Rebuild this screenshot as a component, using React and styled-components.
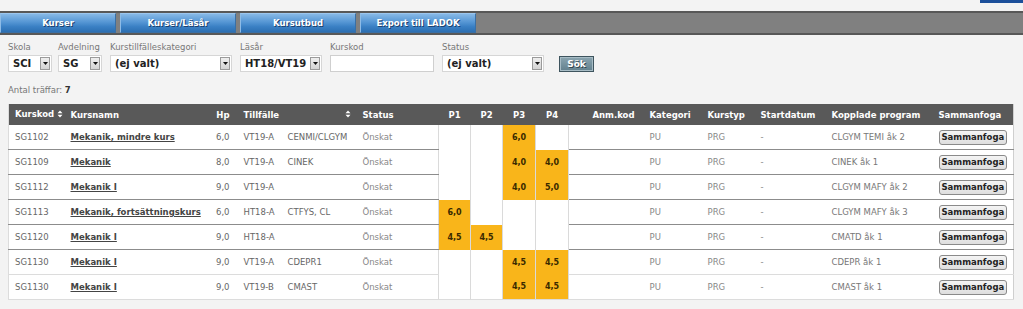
import React from "react";
import styled, { createGlobalStyle } from "styled-components";

const Global = createGlobalStyle`
  html, body { margin: 0; padding: 0; background: #f3f3f3; }
  body { font-family: "DejaVu Sans", Verdana, sans-serif; font-size: 8.5px; color: #666; }
`;

const Page = styled.div`
  width: 1023px;
  height: 309px;
  overflow: hidden;
  background: #f3f3f3;
`;

const TopStrip = styled.div`
  height: 11px;
  display: flex;
  justify-content: flex-end;
`;

const TopMark = styled.div`
  width: 43px;
  height: 3px;
  background: #1b4f9a;
`;

const NavBar = styled.div`
  display: flex;
  gap: 4px;
  height: 20px;
  background: #808080;
  border-top: 2px solid #585858;
  border-bottom: 2px solid #585858;
`;

const Tab = styled.div`
  width: 116px;
  height: 20px;
  box-sizing: border-box;
  display: flex;
  align-items: center;
  justify-content: center;
  background: linear-gradient(#86b8e6, #5596d4 45%, #3a80c4 70%, #2c6fb2);
  border: 1px solid #3a6fa4;
  border-top-color: #9cc6ee;
  border-left-color: #8dbbe6;
  color: #fff;
  font-weight: bold;
  font-size: 8.5px;
  text-shadow: 1px 1px 0 #1d416e;
`;

const Filters = styled.div`
  display: flex;
  align-items: flex-end;
  padding: 7px 8px 0 8px;
`;

const Field = styled.div`
  display: flex;
  flex-direction: column;
  gap: 2px;
  margin-right: ${(p) => p.$mr ?? 8}px;
`;

const Label = styled.div`
  font-size: 8.5px;
  line-height: 11px;
  color: #777;
`;

const SelectBox = styled.div`
  width: ${(p) => p.$w}px;
  height: 17px;
  box-sizing: border-box;
  background: #fff;
  border: 1px solid #d6d6d6;
  display: flex;
  align-items: center;
  justify-content: space-between;
  padding: 0 1px 0 4px;
  font-size: 10px;
  font-weight: bold;
  color: #222;
`;

const ArrowBox = styled.div`
  width: 10px;
  height: 13px;
  box-sizing: border-box;
  border: 1px solid #9a9a9a;
  background: linear-gradient(#eeeeee, #d4d4d4);
  display: flex;
  align-items: center;
  justify-content: center;
`;

const TextInput = styled.div`
  width: ${(p) => p.$w}px;
  height: 17px;
  box-sizing: border-box;
  background: #fff;
  border: 1px solid #cfcfcf;
`;

const SearchButton = styled.div`
  width: 35px;
  height: 16px;
  box-sizing: border-box;
  margin-bottom: 0px;
  background: linear-gradient(#8ba5b0, #62808d);
  border: 1px solid #3e545e;
  box-shadow: inset 0 0 0 1px #a7bcc5;
  color: #fff;
  font-weight: bold;
  font-size: 9px;
  display: flex;
  align-items: center;
  justify-content: center;
  text-shadow: 1px 1px 0 #34464e;
`;

const Hits = styled.div`
  padding: 13px 8px 0 8px;
  height: 11px;
  line-height: 11px;
  font-size: 8.5px;
  color: #777;
  & b { color: #333; }
`;

const TableWrap = styled.div`
  padding: 8px 0 0 8px;
`;

const Table = styled.table`
  border-collapse: collapse;
  table-layout: fixed;
  width: 1005px;
  background: #fff;
  border-left: 1px solid #dcdcdc;
  border-right: 1px solid #cfcfcf;
  border-bottom: 1px solid #dcdcdc;
`;

const HeadCell = styled.th`
  background: #595959;
  color: #fff;
  font-weight: bold;
  font-size: 8.5px;
  height: 21px;
  padding: 0 ${(p) => p.$pr ?? 0}px 0 ${(p) => p.$pl ?? 6}px;
  text-align: ${(p) => p.$align || "left"};
  white-space: nowrap;
  box-sizing: border-box;
`;

const Cell = styled.td`
  height: 24px;
  padding: 0 ${(p) => p.$pr ?? 0}px 0 ${(p) => p.$pl ?? 6}px;
  text-align: ${(p) => p.$align || "left"};
  white-space: nowrap;
  overflow: hidden;
  color: ${(p) => p.$color || "#666"};
  border-bottom: 1px solid ${(p) => (p.$strong ? "#8c8c8c" : "#dcdcdc")};
`;

const PeriodCell = styled.td`
  padding: 0;
  text-align: center;
  background: ${(p) => (p.$on ? "#f9b51a" : "#fff")};
  color: #3a2a00;
  font-weight: bold;
  font-size: 8px;
  border-left: 1px solid #dadada;
  border-right: 1px solid #dadada;
  border-bottom: none;
`;

const CourseLink = styled.span`
  font-weight: bold;
  color: #444;
  text-decoration: underline;
`;

const MergeButton = styled.span`
  display: inline-flex;
  align-items: center;
  height: 15px;
  box-sizing: border-box;
  padding: 0 2px;
  border: 1px solid #8a8a8a;
  border-radius: 3px;
  background: linear-gradient(#f4f4f4, #dedede);
  color: #222;
  font-weight: bold;
  font-size: 8.5px;
`;

const SortIconWrap = styled.span`
  display: inline-block;
  margin-left: 3px;
  vertical-align: -1px;
`;

const SortIcon = () => (
  <SortIconWrap>
    <svg width="6" height="8" viewBox="0 0 6 8">
      <path d="M3 0.5 L5.5 3.2 H0.5 Z" fill="#fff" />
      <path d="M3 7.5 L5.5 4.8 H0.5 Z" fill="#fff" />
    </svg>
  </SortIconWrap>
);

const Arrow = () => (
  <ArrowBox>
    <svg width="5" height="3" viewBox="0 0 5 3">
      <path d="M0 0 H5 L2.5 3 Z" fill="#111" />
    </svg>
  </ArrowBox>
);

const Select = ({ w, value }) => (
  <SelectBox $w={w}>
    <span>{value}</span>
    <Arrow />
  </SelectBox>
);

const cols = [56, 141, 32, 44, 75, 82, 32, 32, 33, 33, 75, 58, 53, 71, 107, 81];

const rows = [
  { code: "SG1102", name: "Mekanik, mindre kurs", hp: "6,0", t: "VT19-A", t2: "CENMI/CLGYM", p: [null, null, "6,0", null], prog: "CLGYM TEMI åk 2", strong: true },
  { code: "SG1109", name: "Mekanik", hp: "8,0", t: "VT19-A", t2: "CINEK", p: [null, null, "4,0", "4,0"], prog: "CINEK åk 1", strong: true },
  { code: "SG1112", name: "Mekanik I", hp: "9,0", t: "VT19-A", t2: "", p: [null, null, "4,0", "5,0"], prog: "CLGYM MAFY åk 2", strong: true },
  { code: "SG1113", name: "Mekanik, fortsättningskurs", hp: "6,0", t: "HT18-A", t2: "CTFYS, CL", p: ["6,0", null, null, null], prog: "CLGYM MAFY åk 3", strong: true },
  { code: "SG1120", name: "Mekanik I", hp: "9,0", t: "HT18-A", t2: "", p: ["4,5", "4,5", null, null], prog: "CMATD åk 1", strong: true },
  { code: "SG1130", name: "Mekanik I", hp: "9,0", t: "VT19-A", t2: "CDEPR1", p: [null, null, "4,5", "4,5"], prog: "CDEPR åk 1", strong: false },
  { code: "SG1130", name: "Mekanik I", hp: "9,0", t: "VT19-B", t2: "CMAST", p: [null, null, "4,5", "4,5"], prog: "CMAST åk 1", strong: false },
];

const tabs = ["Kurser", "Kurser/Läsår", "Kursutbud", "Export till LADOK"];

export default function App() {
  return (
    <Page>
      <Global />
      <TopStrip>
        <TopMark />
      </TopStrip>
      <NavBar>
        {tabs.map((t) => (
          <Tab key={t}>{t}</Tab>
        ))}
      </NavBar>
      <Filters>
        <Field $mr={6}>
          <Label>Skola</Label>
          <Select w={44} value="SCI" />
        </Field>
        <Field $mr={8}>
          <Label>Avdelning</Label>
          <Select w={44} value="SG" />
        </Field>
        <Field $mr={8}>
          <Label>Kurstillfälleskategori</Label>
          <Select w={122} value="(ej valt)" />
        </Field>
        <Field $mr={8}>
          <Label>Läsår</Label>
          <Select w={82} value="HT18/VT19" />
        </Field>
        <Field $mr={8}>
          <Label>Kurskod</Label>
          <TextInput $w={104} />
        </Field>
        <Field $mr={15}>
          <Label>Status</Label>
          <Select w={102} value="(ej valt)" />
        </Field>
        <SearchButton>Sök</SearchButton>
      </Filters>
      <Hits>
        Antal träffar: <b>7</b>
      </Hits>
      <TableWrap>
        <Table>
          <colgroup>
            {cols.map((w, i) => (
              <col key={i} style={{ width: w }} />
            ))}
          </colgroup>
          <thead>
            <tr>
              <HeadCell>
                Kurskod
                <SortIcon />
              </HeadCell>
              <HeadCell>Kursnamn</HeadCell>
              <HeadCell $align="right" $pr={8}>Hp</HeadCell>
              <HeadCell>Tillfälle</HeadCell>
              <HeadCell $align="right" $pr={6}>
                <SortIcon />
              </HeadCell>
              <HeadCell>Status</HeadCell>
              <HeadCell $align="center" $pl={0}>P1</HeadCell>
              <HeadCell $align="center" $pl={0}>P2</HeadCell>
              <HeadCell $align="center" $pl={0}>P3</HeadCell>
              <HeadCell $align="center" $pl={0}>P4</HeadCell>
              <HeadCell $align="right" $pr={9}>Anm.kod</HeadCell>
              <HeadCell>Kategori</HeadCell>
              <HeadCell>Kurstyp</HeadCell>
              <HeadCell>Startdatum</HeadCell>
              <HeadCell>Kopplade program</HeadCell>
              <HeadCell>Sammanfoga</HeadCell>
            </tr>
          </thead>
          <tbody>
            {rows.map((r, i) => (
              <tr key={i}>
                <Cell $strong={r.strong}>{r.code}</Cell>
                <Cell $strong={r.strong}>
                  <CourseLink>{r.name}</CourseLink>
                </Cell>
                <Cell $strong={r.strong} $align="right" $pr={8}>{r.hp}</Cell>
                <Cell $strong={r.strong}>{r.t}</Cell>
                <Cell $strong={r.strong}>{r.t2}</Cell>
                <Cell $strong={r.strong} $color="#888">Önskat</Cell>
                {r.p.map((v, j) => (
                  <PeriodCell key={j} $on={!!v}>{v}</PeriodCell>
                ))}
                <Cell $strong={r.strong}></Cell>
                <Cell $strong={r.strong} $color="#888">PU</Cell>
                <Cell $strong={r.strong} $color="#888">PRG</Cell>
                <Cell $strong={r.strong} $color="#888">-</Cell>
                <Cell $strong={r.strong} $color="#777">{r.prog}</Cell>
                <Cell $strong={r.strong}>
                  <MergeButton>Sammanfoga</MergeButton>
                </Cell>
              </tr>
            ))}
          </tbody>
        </Table>
      </TableWrap>
    </Page>
  );
}
